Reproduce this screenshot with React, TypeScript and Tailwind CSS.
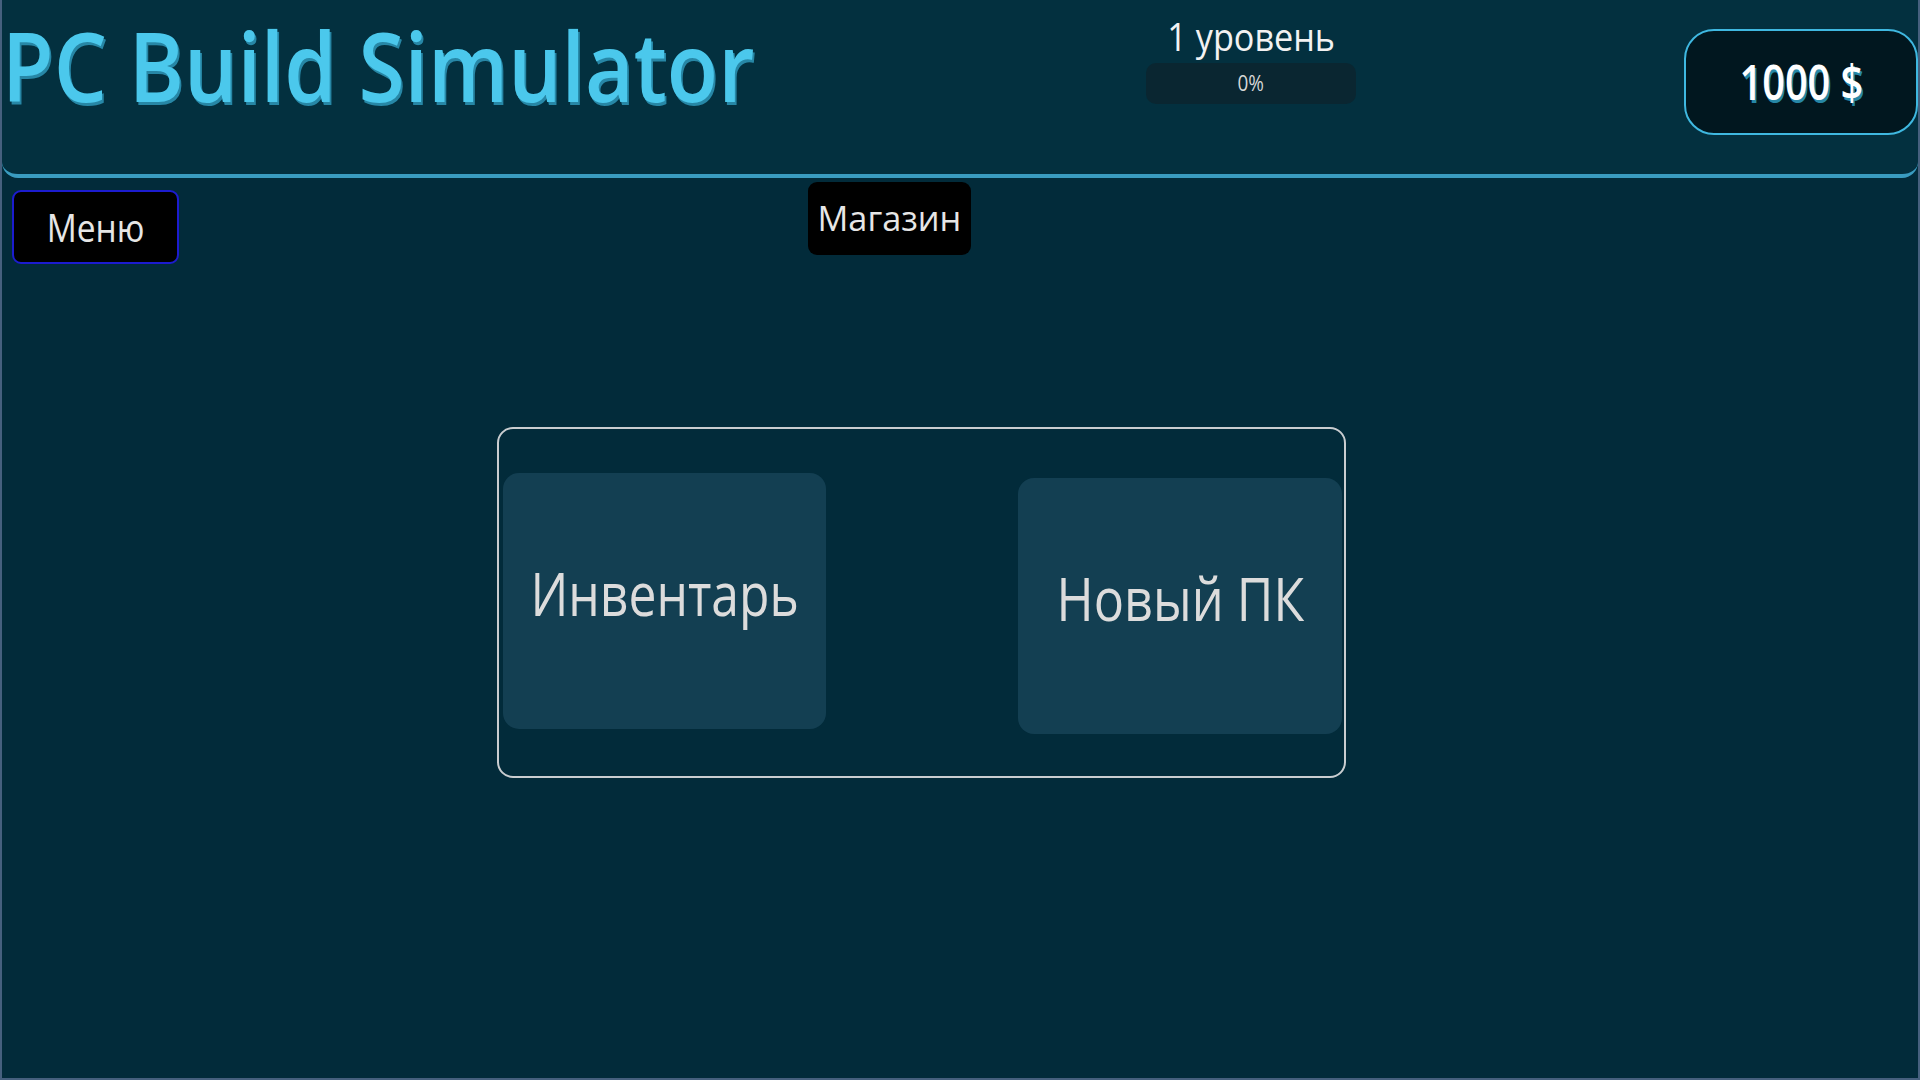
import React from "react";

const font = { fontFamily: '"Open Sans", "Noto Sans", sans-serif' };

export default function App() {
  return (
    <div
      className="w-full h-[1080px] bg-[#022b3a] border-l-2 border-r-2 border-b-2 border-[#46607e] flex flex-col overflow-hidden"
      style={font}
    >
      <header className="h-[178px] shrink-0 bg-[#03303f] border-b-[4px] border-[#3a9cc0] rounded-b-[16px] flex items-start">
        <div className="flex-1 pl-0 pt-0">
          <span className="inline-block origin-left scale-x-[0.875] text-[96px] leading-[130px] font-semibold text-[#4bc8ec] whitespace-nowrap [text-shadow:2px_3px_0_#2787a6]">
            PC Build Simulator
          </span>
        </div>
        <div className="w-[210px] mr-[328px] flex flex-col items-center pt-[12px]">
          <span className="inline-block scale-x-[0.9] text-[38px] leading-[48px] text-[#f2f2f2] whitespace-nowrap">
            1 уровень
          </span>
          <div className="mt-[3px] w-[210px] h-[41px] rounded-[10px] bg-[#0a2631] flex items-center justify-center">
            <span className="inline-block scale-x-[0.9] text-[21px] text-[#d6d6d6]">0%</span>
          </div>
        </div>
        <div className="mt-[29px] w-[234px] h-[106px] rounded-[30px] border-2 border-[#3fb8e0] bg-[#01171f] flex items-center justify-center">
          <span className="inline-block scale-x-[0.81] text-[49px] font-semibold text-white whitespace-nowrap [text-shadow:2px_3px_0_#2787a6]">
            1000 $
          </span>
        </div>
      </header>

      <div className="flex items-start">
        <button className="ml-[10px] mt-[12px] w-[167px] h-[74px] rounded-[9px] border-2 border-[#1c1ccf] bg-black flex items-center justify-center">
          <span className="inline-block scale-x-[0.88] text-[38px] text-[#e6e6e6]">Меню</span>
        </button>
        <button className="ml-[629px] mt-[4px] w-[163px] h-[73px] rounded-[9px] bg-black flex items-center justify-center">
          <span className="inline-block scale-x-[0.98] text-[35px] text-[#e6e6e6] whitespace-nowrap">Магазин</span>
        </button>
      </div>

      <div className="ml-[495px] mt-[163px] w-[849px] h-[351px] border-2 border-[#c9cdd0] rounded-[16px] flex justify-between items-start">
        <div className="ml-[4px] mt-[44px] w-[323px] h-[256px] rounded-[16px] bg-[#133f52] flex items-center justify-center pb-[16px]">
          <span className="inline-block scale-x-[0.83] text-[60px] text-[#dcdcdc] whitespace-nowrap">Инвентарь</span>
        </div>
        <div className="mr-[2px] mt-[49px] w-[324px] h-[256px] rounded-[16px] bg-[#133f52] flex items-center justify-center pb-[16px]">
          <span className="inline-block scale-x-[0.84] text-[60px] text-[#dcdcdc] whitespace-nowrap">Новый ПК</span>
        </div>
      </div>
    </div>
  );
}
